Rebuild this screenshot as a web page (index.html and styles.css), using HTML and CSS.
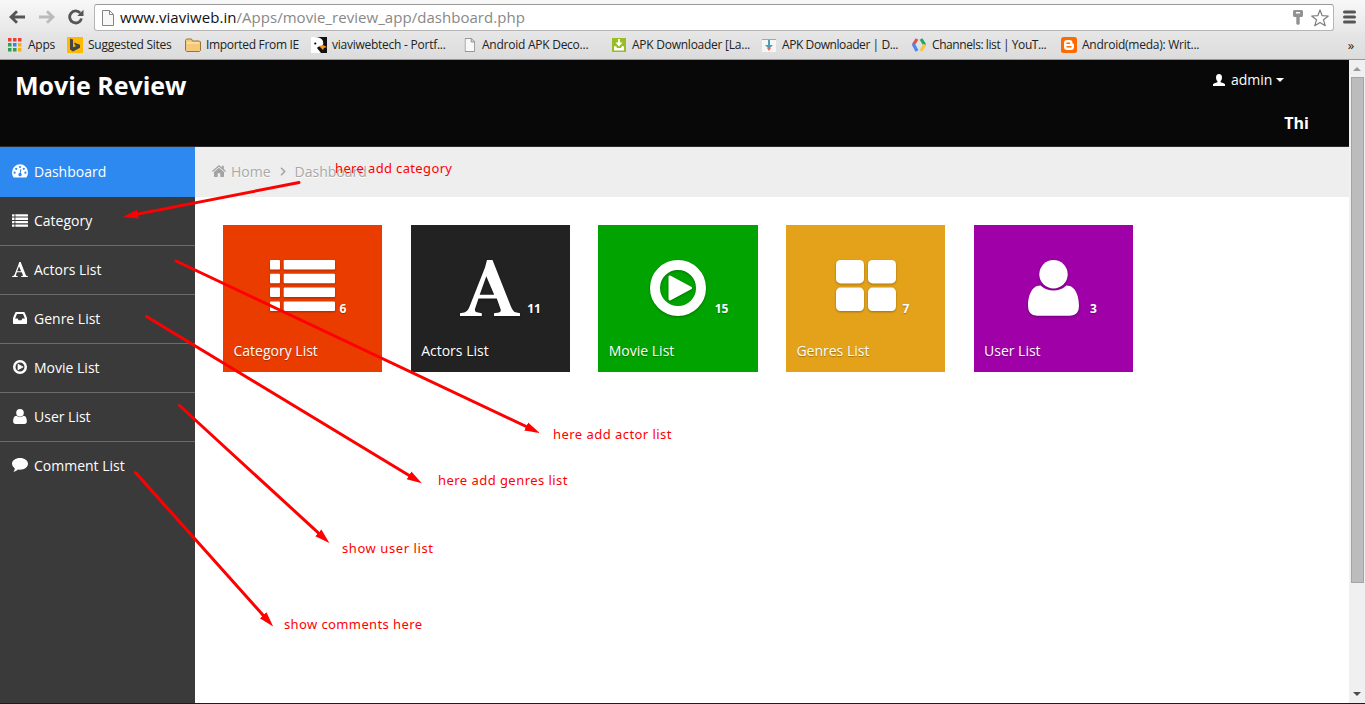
FILE: index.html
```html
<!DOCTYPE html>
<html lang="en">
<head>
<meta charset="utf-8">
<title>Movie Review</title>
<link rel="stylesheet" href="styles.css">
</head>
<body>
<svg class="defs" width="0" height="0" aria-hidden="true">
  <symbol id="list" viewBox="0 0 65 51"><g fill="currentColor"><rect width="10" height="9.5" rx="1"/><rect x="13.7" width="51.3" height="9.5" rx="1"/><rect y="13.8" width="10" height="9.5" rx="1"/><rect x="13.7" y="13.8" width="51.3" height="9.5" rx="1"/><rect y="27.6" width="10" height="9.5" rx="1"/><rect x="13.7" y="27.6" width="51.3" height="9.5" rx="1"/><rect y="41.4" width="10" height="9.5" rx="1"/><rect x="13.7" y="41.4" width="51.3" height="9.5" rx="1"/></g></symbol>
  <symbol id="serif" viewBox="0 0 60 56"><path fill="currentColor" fill-rule="evenodd" d="M27 0h5.5l18 45.500q2.500 6.500 5 6.800l4.500.9V56H34v-2.700l5-.8q2.500-.4 1.500-3.500L36.800 38.500H18.500L15.300 48q-1.300 3.800 1.500 4.300l5 .9V56H0v-2.700l4.200-.9q3.500-.8 5.400-5.900L25 7.500zM26.300 16.200L19.700 34.700H34.200z"/></symbol>
  <symbol id="play" viewBox="0 0 56 56"><circle cx="28" cy="28" r="23" fill="none" stroke="currentColor" stroke-width="10"/><path fill="currentColor" stroke="currentColor" stroke-width="3" stroke-linejoin="round" d="M20 17v22l20.500-11z"/></symbol>
  <symbol id="grid" viewBox="0 0 60 51"><g fill="currentColor"><rect width="28" height="23.400" rx="4.500"/><rect x="32" width="28" height="23.400" rx="4.500"/><rect y="27.600" width="28" height="23.400" rx="4.500"/><rect x="32" y="27.600" width="28" height="23.400" rx="4.500"/></g></symbol>
  <symbol id="user" viewBox="0 0 51 56"><circle cx="25.500" cy="14.300" r="14.200" fill="currentColor"/><path fill="currentColor" d="M12.500 25.500q5.500 5 13 5t13-5C48 25.500 51 37 51 46q0 9.700-9 9.700H9Q0 55.700 0 46C0 37 3 25.500 12.500 25.500z"/></symbol>
  <symbol id="gauge" viewBox="0 0 16 14"><path fill="currentColor" d="M8 .3A8 8 0 0 0 0 8.400Q0 11 1.300 13q.2.500.8.500h11.800q.6 0 .8-.5Q16 11 16 8.400A8 8 0 0 0 8 .3z"/><g class="cut"><circle cx="2.600" cy="8.700" r="1.100"/><circle cx="4.200" cy="4.800" r="1.100"/><circle cx="8" cy="3" r="1.100"/><circle cx="11.800" cy="4.800" r="1.100"/><circle cx="13.400" cy="8.700" r="1.100"/><path d="M8.400 5l1 .2-.7 3.900a1.700 1.700 0 1 1-1-.1z"/></g></symbol>
  <symbol id="inbox" viewBox="0 0 14 12"><path fill="currentColor" fill-rule="evenodd" d="M3.200 0h7.600q.7 0 1 .7L14 6v5.200q0 .8-.8.800H.8Q0 12 0 11.200V6L2.200.7q.3-.7 1-.7zM4 2L2.100 6.500h2.600l.8 1.800h3l.8-1.800h2.600L10 2z"/></symbol>
  <symbol id="comment" viewBox="0 0 16 14"><path fill="currentColor" d="M8 0c4.500 0 8 2.500 8 5.800s-3.500 5.900-8 5.900q-1 0-1.800-.1Q4 13.500 1.300 14q1.400-1.400 1.500-3.500Q0 8.700 0 5.800C0 2.500 3.500 0 8 0z"/></symbol>
  <symbol id="file" viewBox="0 0 12 16"><path fill="#f8f8f8" stroke="#858585" d="M.5.500h7l4 4v11H.5zM7.500.500v4h4"/></symbol>
</svg>

<div class="toolbar">
  <svg class="nav" width="17" height="14" viewBox="0 0 17 14"><path d="M16 7H3M8 1.200L2 7l6 5.800"/></svg>
  <svg class="nav off" width="17" height="14" viewBox="0 0 17 14"><path d="M1 7h13M9 1.200L15 7l-6 5.800"/></svg>
  <svg class="nav reload" width="16" height="16" viewBox="0 0 16 16"><path d="M13.500 9.500A6 6 0 1 1 12.200 4"/><path class="tip" d="M15.500.8V7H9.300z"/></svg>
  <div class="address">
    <svg width="12" height="16"><use href="#file"/></svg>
    <span class="url">www.viaviweb.in<span>/Apps/movie_review_app/dashboard.php</span></span>
    <svg class="key" width="10" height="15" viewBox="0 0 10 15"><path fill="#929292" fill-rule="evenodd" d="M1 0h8l1 1v5L9 7H6.700v7L5 15l-1.700-1V7H1L0 6V1zM3 2v1.500h4V2z"/></svg>
    <svg width="18" height="18" viewBox="0 0 18 18"><path fill="#fff" stroke="#7d7d7d" stroke-linejoin="round" stroke-width="1.200" d="M9 1l2.200 5.700 6.100.3-4.800 3.800 1.700 5.900L9 13.400l-5.200 3.300 1.700-5.900L.7 7l6.100-.3z"/></svg>
  </div>
  <svg class="burger" width="13" height="14" viewBox="0 0 13 14"><path stroke="#555" stroke-width="3" stroke-linecap="round" d="M1.500 2h10M1.500 7h10M1.500 12h10"/></svg>
</div>

<div class="bookmarks">
  <div class="bm apps"><svg width="14" height="14" viewBox="0 0 14 14"><path fill="#ed3f34" d="M0 0h3.500v3.500H0zM5 0h3.500v3.500H5zM10 0h3.500v3.500H10z"/><path fill="#2d9f4f" d="M0 5h3.500v3.500H0zM0 10h3.500v3.500H0zM5 10h3.500v3.500H5z"/><path fill="#3b82f0" d="M5 5h3.500v3.500H5z"/><path fill="#f8ae18" d="M10 5h3.500v3.500H10zM10 10h3.500v3.500H10z"/></svg><span>Apps</span></div>
  <div class="bm sugg"><svg width="16" height="16" viewBox="0 0 16 16"><path fill="#ffb900" d="M0 0h16v16H0z"/><path fill="#444" d="M3 1.500l3 1v7.700L9.500 9 8 8.200 7 5.500l6 2.300v3L6 14.500l-3-2z"/></svg><span>Suggested Sites</span></div>
  <div class="bm imp"><svg width="16" height="14" viewBox="0 0 16 14"><path fill="#f5c97c" stroke="#9c7432" d="M.5 12.500v-10l1-1.500h5l1 2h7l1 1v8.500l-1 1h-13z"/><path stroke="#fff0ba" d="M2 5h12"/></svg><span>Imported From IE</span></div>
  <div class="bm cut150"><svg width="16" height="16" viewBox="0 0 16 16"><path fill="#111" d="M0 0h16v16H0z"/><path fill="#fff" d="M0 0h4q6 0 8 4 1 3-1 5-4 0-5 2l4 5H0z"/><circle cx="4.300" cy="6.500" r="1.100"/><path fill="#f4941e" d="M8 9l4-1 4 2-3 1-1 2z"/></svg><span>viaviwebtech - Portf...</span></div>
  <div class="bm cut150"><svg width="16" height="14" viewBox="-3 0 16 16"><use href="#file" width="12" height="16"/></svg><span>Android APK Deco...</span></div>
  <div class="bm cut150"><svg width="16" height="14" viewBox="0 0 16 14"><path fill="#98bd25" d="M1 0h14v14H1z"/><path fill="#fff" d="M7 1h2v3.500h2.500L8 8.500l-3.500-4H7zM3 8.500l2-.5 1 2h4l1-2 2 .5v4H3z"/></svg><span>APK Downloader [La...</span></div>
  <div class="bm cut150 tight"><svg width="16" height="14" viewBox="0 0 16 14"><path fill="#f6f6f6" d="M1 1h14v13H1z"/><path stroke="#a5a5a5" d="M1 1.500h14"/><path fill="#4b9eb5" d="M7 2h2v5h3l-4 4-4-4h3z"/><path fill="#df6c5c" d="M6 10h4l-2 3z"/></svg><span>APK Downloader | D...</span></div>
  <div class="bm cut150 tight"><svg width="16" height="14" viewBox="0 0 16 14" fill="none" stroke-width="3.200"><path stroke="#e3524a" d="M6 1L2.200 7"/><path stroke="#4788f3" d="M2.200 6L6 13"/><path stroke="#25a565" d="M10 1l3.800 6"/><path stroke="#f8c63c" d="M13.800 6.500L10 13"/></svg><span>Channels: list | YouT...</span></div>
  <div class="bm cut150"><svg width="16" height="16" viewBox="0 0 16 16"><rect width="16" height="16" rx="2.500" fill="#ff6a00"/><path fill="#fff" d="M6 3h2.500q3 0 3 3 0 1 1.500 1v3q0 3-3 3H6q-3 0-3-3V6q0-3 3-3z"/><path stroke="#ff6a00" stroke-width="1.400" stroke-linecap="round" d="M6 6.200h2.500M6 9.800h4"/></svg><span>Android(meda): Writ...</span></div>
  <span class="more">»</span>
</div>

<div class="viewport">
  <div class="page">
    <header class="header">
      <h1>Movie Review</h1>
      <div class="account">
        <div class="admin"><svg width="12" height="12" viewBox="0 0 12 12"><path fill="#fff" d="M6 0q3 0 3 3.500Q9 6 7.600 7v1.200q4 1 4.400 2V12H0v-1.800q.4-1 4.400-2V7Q3 6 3 3.500 3 0 6 0z"/></svg><span>admin</span><i class="caret"></i></div>
        <div class="ticker">Thi</div>
      </div>
    </header>
    <div class="body">
      <nav class="side">
        <a class="item active"><svg width="17" height="14"><use href="#gauge"/></svg>Dashboard</a>
        <a class="item"><svg width="17" height="13"><use href="#list"/></svg>Category</a>
        <a class="item"><svg width="17" height="15"><use href="#serif"/></svg>Actors List</a>
        <a class="item"><svg width="17" height="12"><use href="#inbox"/></svg>Genre List</a>
        <a class="item"><svg width="17" height="14"><use href="#play"/></svg>Movie List</a>
        <a class="item"><svg width="17" height="15"><use href="#user"/></svg>User List</a>
        <a class="item last"><svg width="17" height="14"><use href="#comment"/></svg>Comment List</a>
      </nav>
      <main class="main">
        <div class="crumbs">
          <svg width="14" height="12" viewBox="0 0 14 12"><path fill="#a3a3a3" d="M7 0l2.800 2.400V.8h2v3.300L14 6l-.8.900L7 1.700.8 6.900 0 6zM7 2.800l5 4.200v4.300q0 .7-.7.700H8.300V8.300H5.700V12h-3Q2 12 2 11.300V7z"/></svg>
          <span class="home">Home</span>
          <svg class="chev" width="6" height="9" viewBox="0 0 6 9"><path fill="none" stroke="#a3a3a3" stroke-width="1.500" d="M1 .7l3.700 3.800L1 8.300"/></svg>
          <span>Dashboard</span>
        </div>
        <div class="tiles">
          <div class="tile orange"><svg width="65" height="51"><use href="#list"/></svg><b>6</b><p>Category List</p></div>
          <div class="tile black"><svg width="60" height="56"><use href="#serif"/></svg><b>11</b><p>Actors List</p></div>
          <div class="tile green"><svg width="56" height="56"><use href="#play"/></svg><b>15</b><p>Movie List</p></div>
          <div class="tile yellow"><svg width="60" height="51"><use href="#grid"/></svg><b>7</b><p>Genres List</p></div>
          <div class="tile purple"><svg width="51" height="56"><use href="#user"/></svg><b>3</b><p>User List</p></div>
        </div>
      </main>
    </div>
  </div>
  <div class="scroll"><i class="up"></i><div class="thumb"></div><i class="down"></i></div>
</div>

<svg class="notes" width="1365" height="704" viewBox="0 0 1365 704">
  <defs><marker id="head" markerUnits="userSpaceOnUse" markerWidth="16" markerHeight="12" refX="7" refY="5" orient="auto"><path fill="#f00" d="M0 0.500L15 5 0 9.500z"/></marker></defs>
  <g class="arrows">
    <path d="M299 182.500L131 215.400"/>
    <path d="M176 261L532.500 429.500"/>
    <path d="M146.500 316.500L415 479"/>
    <path d="M179.500 405.500L323.500 537.600"/>
    <path d="M135.500 472.500L267.800 620.500"/>
  </g>
  <text x="335" y="173" textLength="117">here add category</text>
  <text x="553" y="439" textLength="118.500">here add actor list</text>
  <text x="438" y="485" textLength="129.500">here add genres list</text>
  <text x="342" y="553" textLength="91">show user list</text>
  <text x="284" y="629" textLength="138">show comments here</text>
</svg>
</body>
</html>
```

FILE: styles.css
```css
* { box-sizing: border-box; }
body {
  margin: 0;
  width: 1365px;
  height: 704px;
  display: flex;
  flex-direction: column;
  overflow: hidden;
  position: relative;
  background: #fff;
  font-family: "Open Sans", "Noto Sans", sans-serif;
  font-size: 14px;
}
svg { flex: none; }
.defs { position: absolute; }

.toolbar {
  height: 32px;
  padding: 4px 7px 0 9px;
  display: flex;
  align-items: flex-start;
  background: linear-gradient(#f8f8f8, #e8e8e8);
}
.nav { margin: 6px 12px 0 0; fill: none; stroke: #555; stroke-width: 2.800; }
.nav.off { stroke: #bbb; }
.nav.reload { margin: 5px 10px 0 1px; }
.nav .tip { fill: #555; stroke: none; }
.address {
  width: 1240px;
  height: 27px;
  flex: none;
  display: flex;
  align-items: center;
  padding: 0 4px 0 7px;
  background: #fff;
  border: 1px solid #b5b5b5;
  border-top-color: #999;
  border-radius: 3px;
}
.url { flex: 1; margin-left: 6px; padding-bottom: 2px; font-size: 15px; line-height: 22px; letter-spacing: 0.04px; color: #111; }
.url span { color: #888; }
.key { margin-right: 8px; }
.burger { margin: 6px 0 0 9px; }

.bookmarks {
  height: 28px;
  display: flex;
  align-items: center;
  padding: 0 11px 2px 8px;
  background: linear-gradient(#e6e6e6, #dcdcdc);
  border-bottom: 1px solid #999;
  color: #222;
  font-size: 12px;
  letter-spacing: -0.25px;
}
.bm { display: flex; align-items: center; gap: 5px; white-space: nowrap; }
.apps { width: 59px; gap: 6px; }
.sugg { width: 118px; }
.imp { width: 126px; letter-spacing: -0.32px; }
.cut150 { width: 150px; }
.tight { letter-spacing: -0.42px; }
.more { margin-left: auto; font-size: 13px; }

.viewport {
  height: 644px;
  display: flex;
  border-bottom: 1px solid #1c1c20;
}
.page { width: 1349px; display: flex; flex-direction: column; }
.header {
  height: 87px;
  display: flex;
  justify-content: space-between;
  padding: 7px 40px 0 15px;
  background: #080808;
  border-bottom: 1px solid #2e2a2c;
  color: #fff;
}
h1 { margin: 0; font-size: 25px; line-height: 36px; font-weight: 700; }
.account { width: 96px; margin-top: 1px; font-size: 14px; }
.admin { display: flex; align-items: center; line-height: 24px; }
.admin span { margin: 0 4px 0 6px; }
.caret { border: 4px solid transparent; border-top-color: #fff; border-bottom: 0; }
.ticker { margin-top: 19px; text-align: right; font-size: 16px; line-height: 24px; font-weight: 700; }

.body { flex: 1; display: flex; }
.side { width: 195px; background: #3a3a3a; }
.item {
  height: 49px;
  display: flex;
  align-items: center;
  gap: 5px;
  padding: 0 0 2px 12px;
  border-bottom: 1px solid #6b6b6b;
  color: #fff;
}
.item svg { width: 16px; margin-right: 1px; }
.item.active { height: 50px; background: #2d89ef; border-bottom: 0; }
.item.last { border-bottom-color: transparent; }
.cut { fill: #2d89ef; }
.main { flex: 1; background: #fff; }
.crumbs {
  height: 50px;
  display: flex;
  align-items: center;
  padding: 0 0 2px 17px;
  background: #eee;
  color: #a8a8a8;
  text-shadow: 0 1px 0 #fff;
}
.home { margin-left: 5px; }
.chev { margin: 0 9px 0 9px; }
.tiles { display: flex; gap: 28.200px; padding: 28px 0 0 28px; }
.tile {
  width: 159.450px;
  height: 147px;
  display: grid;
  grid-template-columns: 116.500px 1fr;
  grid-template-rows: 35px 56px 1fr;
  color: #fff;
}
.tile svg { grid-area: 2 / 1 / 3 / 3; justify-self: center; filter: drop-shadow(0 1px 1px rgba(0, 0, 0, .3)); }
.tile b { grid-area: 2 / 2; align-self: end; margin-bottom: -1px; font-size: 12px; line-height: 16px; text-shadow: 0 1px 1px rgba(0, 0, 0, .3); }
.tile p { grid-area: 3 / 1 / 4 / 3; margin: 25px 0 0 10.500px; line-height: 20px; text-shadow: 0 1px 1px rgba(0, 0, 0, .3); }
.orange { background: #eb3c00; }
.black { background: #222; }
.green { background: #00a300; }
.yellow { background: #e3a21a; }
.purple { background: #9f00a7; }

.scroll {
  width: 16px;
  display: flex;
  flex-direction: column;
  align-items: center;
  background: #f0f0f0;
}
.up { margin: 7px 0 6px; border: 4px solid transparent; border-bottom-color: #999; border-top: 0; }
.thumb { width: 13px; height: 506px; background: #bcbcbc; border: 1px solid #a3a3a3; }
.down { margin: auto 0 7px; border: 4px solid transparent; border-top-color: #4c4c4c; border-bottom: 0; }

/* Annotations lie over the whole page */
.notes { position: absolute; left: 0; top: 0; }
.arrows path { fill: none; stroke: #f00; stroke-width: 3; stroke-linecap: round; marker-end: url(#head); }
.notes text { fill: #f00; font-family: "Noto Sans", "Open Sans", sans-serif; font-size: 13px; }
```
